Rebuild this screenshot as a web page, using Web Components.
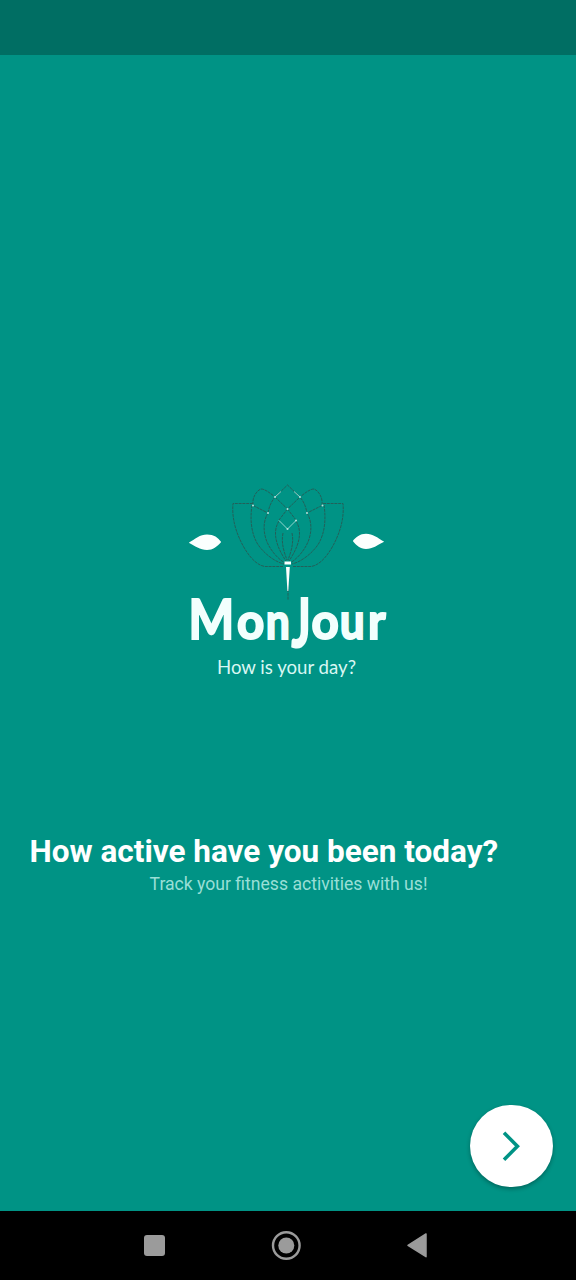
<!DOCTYPE html>
<html lang="en">
<head>
<meta charset="utf-8">
<title>MonJour</title>
<style>
html,body{margin:0;height:100%;background:#009385}
body{font-family:Roboto,"Liberation Sans",sans-serif}
</style>
</head>
<body>
<mj-screen>
  <mj-status slot="status"></mj-status>
  <mj-logo></mj-logo>
  <mj-intro><span slot="title">How active have you been today?</span><span slot="sub">Track your fitness activities with us!</span></mj-intro>
  <mj-next slot="action"></mj-next>
  <mj-nav slot="nav"></mj-nav>
</mj-screen>
<script>
const define = (name, html) => customElements.define(name, class extends HTMLElement {
  constructor() {
    super();
    this.attachShadow({mode: 'open'}).innerHTML = html;
  }
});

define('mj-screen', `<style>
:host{display:flex;flex-direction:column;height:1280px;width:576px;background:#009385;overflow:hidden}
main{flex:1;display:flex;flex-direction:column;align-items:stretch;padding-top:425px;box-sizing:border-box}
footer{margin-top:auto;display:flex;justify-content:flex-end;padding:0 23.25px 23.75px 0}
</style>
<slot name="status"></slot>
<main><slot></slot><footer><slot name="action"></slot></footer></main>
<slot name="nav"></slot>`);

define('mj-status', `<style>:host{display:block;height:55px;background:#006e63}</style>`);

define('mj-logo', `<style>
:host{display:block;height:210px;margin:0 auto;width:216px}
svg{display:block}
text{font-family:Lato,"Liberation Sans",sans-serif;fill:#f2fffd}
.name{font-weight:700;font-size:49px;stroke:#f2fffd;stroke-width:2}
.tag{fill:#d9f7f3}
.lines{fill:none;stroke:#2a5852;stroke-width:1;stroke-dasharray:3 .8;opacity:.85}
.mark{fill:#fbfffe}
.dots{fill:#b5e5df}
.light{fill:none;stroke:#b5e5df;stroke-width:.8}
</style>
<svg width="216" height="210" viewBox="180 480 216 210">
  <g class="lines">
    <path d="M253 503.500H233C232 514 234 525 238 535C244 550 254 565 265 566.500H283"/>
    <path d="M323 503.500H343C344 514 342 525 338 535C332 550 322 565 311 566.500H293"/>
    <path d="M252 505C250 519 251 532 257 543C263 553 275 562 284 564"/>
    <path d="M324 505C326 519 325 532 319 543C313 553 301 562 292 564"/>
    <path d="M253 505C252 498 256 491 261 489C265 489 270 493 275 497"/>
    <path d="M322 505C323 498 319 491 314 489C310 489 305 493 300 497"/>
    <path d="M253 505.500L268 513M322 505.500L307 513"/>
    <path d="M268 513C263 521 263 532 267 542C271 551 278 559 285 563"/>
    <path d="M307 513C312 521 312 532 308 542C304 551 297 559 290 563"/>
    <path d="M268 513C269 507 271 502 275 497L287.500 485L300 497C304 502 306 507 307 513"/>
    <path d="M275 497L287.500 509L300 497M287.500 509L279 520M287.500 509L296 520"/>
    <path d="M279 521C272 532 276 546 286 561M296 521C303 532 299 546 289 561"/>
    <path d="M283 533C281 543 284 552 287 560M292 533C294 543 291 552 288 560"/>
    <path d="M288 570V600"/>
  </g>
  <path class="light" d="M279 520.500L287.500 529L296 520.500M281 491.500L275 497M294 491.500L300 497"/>
  <g class="dots"><circle cx="253" cy="505.500" r="1"/><circle cx="322.500" cy="505.500" r="1"/><circle cx="275" cy="497" r="1"/><circle cx="300" cy="497" r="1"/><circle cx="268" cy="513" r="1"/><circle cx="307" cy="513" r="1"/><circle cx="287.500" cy="509" r="1"/><circle cx="296" cy="520.500" r="1"/><circle cx="287.500" cy="529" r="1"/></g>
  <path class="mark" d="M284.500 561.500H291V564.500H284.500ZM286 567H289.800L288.300 591H287.400Z"/>
  <path class="mark" d="M188.800 542.800C195 539 200 534.500 207 534.500C214 534.500 218 537.500 221.200 542C217 546.500 213 550 207 550C200 550 195 546 188.800 542.800Z"/>
  <path class="mark" d="M352.800 541C356 537 360 533.700 366 533.700C373 533.700 377 537.500 384.200 541.700C377 545 373 549 366 549C360 549 356 545 352.800 541Z"/>
  <g class="name">
    <text transform="translate(188.500 639) scale(.88 1)" style="font-size:55px">M</text>
    <text transform="translate(237 639) scale(.97 1)">o</text>
    <text transform="translate(265.800 639) scale(.87 1)">n</text>
    <text transform="translate(291.500 647) scale(.68 1)" style="font-size:66px">J</text>
    <text transform="translate(311.500 639) scale(.97 1)">o</text>
    <text transform="translate(339.800 639) scale(.9 1)">u</text>
    <text transform="translate(368 639) scale(.96 1)">r</text>
  </g>
  <text class="tag" x="217" y="674" font-size="19.500" textLength="139" lengthAdjust="spacingAndGlyphs">How is your day?</text>
</svg>`);

define('mj-intro', `<style>
:host{display:block;padding-top:143px;color:#fff}
h1{margin:0 0 0 29.500px;font-size:31.5px;line-height:38px;font-weight:700;white-space:nowrap}
p{margin:3px 0 0 1px;text-align:center;font-size:17.6px;line-height:21px;color:#99dfd6}
</style><h1><slot name="title"></slot></h1><p><slot name="sub"></slot></p>`);

define('mj-next', `<style>
:host{display:block}
button{display:block;width:82.500px;height:82.500px;padding:0;border:0;border-radius:50%;background:#fff;box-shadow:0 2px 4px rgba(0,0,0,.3)}
svg{display:block}
</style><button aria-label="Next"><svg width="82.500" height="82.500" viewBox="0 0 83 83"><path d="M34.200 28L47.700 41.500L34.200 55" fill="none" stroke="#009385" stroke-width="3.600"/></svg></button>`);

define('mj-nav', `<style>
:host{display:block;height:69px;background:#000}
svg{display:block}
</style><svg width="576" height="69" viewBox="0 1211 576 69">
<rect x="144" y="1235" width="21" height="21" rx="3" fill="#9b9b9b"/>
<circle cx="286.300" cy="1245.500" r="13.300" fill="none" stroke="#9b9b9b" stroke-width="2.400"/><circle cx="286.300" cy="1245.500" r="8" fill="#9b9b9b"/>
<path d="M408 1245.300L426 1234V1256.700Z" fill="#9b9b9b" stroke="#9b9b9b" stroke-width="1.500" stroke-linejoin="round"/></svg>`);
</script>
</body>
</html>
